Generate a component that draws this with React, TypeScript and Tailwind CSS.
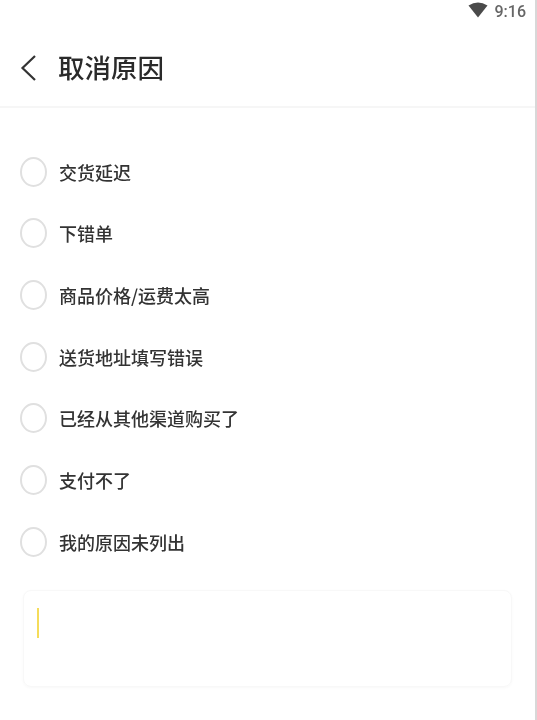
const reasons = [
  "交货延迟",
  "下错单",
  "商品价格/运费太高",
  "送货地址填写错误",
  "已经从其他渠道购买了",
  "支付不了",
  "我的原因未列出",
];

const font = "font-['Noto_Sans_CJK_SC','Noto_Sans',sans-serif]";

export default function App() {
  return (
    <div className={`${font} h-[720px] w-[537px] overflow-hidden border-r-2 border-[#d8d8d8] bg-white text-[#2a2a2a] blur-[0.5px]`}>
      {/* status bar */}
      <div className="flex h-[24px] items-start justify-end gap-[7px] pr-[9px] pt-[2px]">
        <svg width="20" height="16" viewBox="0 0 20 16">
          <path d="M0.5 3.5 Q10 -2.5 19.5 3.5 L10 15.5 Z" fill="#4a4a4a" />
        </svg>
        <span className="mt-[2px] font-['Roboto',sans-serif] text-[16px] font-medium leading-none text-[#666666]">9:16</span>
      </div>

      {/* header */}
      <div className="flex h-[84px] items-center border-b-2 border-[#f6f6f6] pl-[20px] pt-[5px]">
        <svg width="16" height="28" viewBox="0 0 16 28" fill="none">
          <path d="M15 2 L2.5 14 L15 26" stroke="#333333" strokeWidth="2.2" />
        </svg>
        <h1 className="ml-[22px] text-[26.5px] font-medium leading-none text-[#2a2a2a]">取消原因</h1>
      </div>

      {/* reasons */}
      <ul className="mt-[50px] flex flex-col gap-[34.7px] pl-[20px]">
        {reasons.map((reason) => (
          <li key={reason} className="flex h-[27px] items-center">
            <span className="h-[30px] w-[27px] shrink-0 rounded-[50%] border-2 border-[#e0e0e0]" />
            <span className="ml-[12px] text-[18px] font-medium leading-none text-[#333333]">{reason}</span>
          </li>
        ))}
      </ul>

      {/* other reason input */}
      <div className="mx-[23px] mt-[35px] h-[97px] w-[489px] rounded-[8px] border border-[#f8f8f8] pl-[13px] pt-[17px] shadow-[0_1px_3px_rgba(0,0,0,0.03)]">
        <div className="h-[30px] w-[2px] bg-[#f5dc5a]" />
      </div>
    </div>
  );
}
